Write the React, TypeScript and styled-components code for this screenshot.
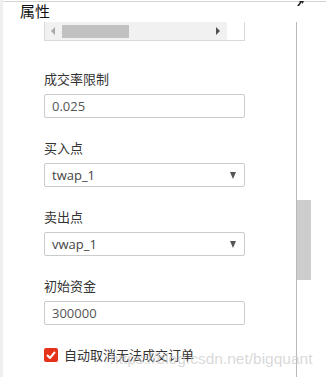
import React from "react";
import styled, { createGlobalStyle } from "styled-components";

const GlobalStyle = createGlobalStyle`
  html, body {
    margin: 0;
    padding: 0;
    background: #fff;
  }
  body {
    font-family: "Open Sans", "Noto Sans CJK SC", sans-serif;
  }
`

const Frame = styled.div`
  position: relative;
  width: 326px;
  height: 377px;
  overflow: hidden;
  display: flex;
  background: #fff;
`

const LeftStrip = styled.div`
  width: 3px;
  flex-shrink: 0;
  background: #efefef;
`

const Main = styled.div`
  flex: 1;
  display: flex;
  flex-direction: column;
`

const TopRule = styled.div`
  height: 1px;
  margin-top: 1px;
  background: #d4d4d4;
`

const Header = styled.div`
  height: 20px;
  display: flex;
  align-items: center;
  justify-content: space-between;
  padding-left: 17px;
  padding-right: 22px;
`

const Title = styled.span`
  font-family: "Noto Sans CJK SC", sans-serif;
  font-size: 15px;
  line-height: 20px;
  color: #111;
  margin-top: -2px;
`

const CornerIcon = styled.svg`
  align-self: flex-start;
  margin-top: -1px;
`

const Body = styled.div`
  flex: 1;
  display: flex;
`

const Content = styled.div`
  width: 294px;
  border-right: 1px solid #b9b9b9;
  padding-left: 41px;
  box-sizing: border-box;
`

const ScrollTrack = styled.div`
  width: 14px;
  padding-top: 178px;
`

const ScrollThumb = styled.div`
  height: 80px;
  background: #cdcdcd;
`

const HScroll = styled.div`
  width: 201px;
  height: 19px;
  box-sizing: border-box;
  display: flex;
  border: 1px solid #d9d9d9;
  border-top: none;
  background: #f1f1f1;
`

const HTrack = styled.div`
  flex: 1;
  display: flex;
  align-items: center;
  padding-left: 6px;
`

const HThumb = styled.div`
  width: 67px;
  height: 13px;
  margin-left: 7px;
  background: #c1c1c1;
`

const HSpacer = styled.div`
  flex: 1;
`

const Arrow = styled.span<{ $dir: "left" | "right"; $color: string }>`
  width: 0;
  height: 0;
  border-top: 4px solid transparent;
  border-bottom: 4px solid transparent;
  ${({ $dir, $color }) =>
    $dir === "left"
      ? `border-right: 4px solid ${$color};`
      : `border-left: 4px solid ${$color}; margin-right: 7px;`}
`

const Corner = styled.div`
  width: 17px;
  background: #fff;
`

const Form = styled.div`
  padding-top: 29px;
`

const Field = styled.div`
  & + & {
    margin-top: 21px;
  }
`

const Label = styled.div`
  font-family: "Noto Sans CJK SC", sans-serif;
  font-size: 13px;
  line-height: 18px;
  color: #333;
  margin-bottom: 6px;
`

const Box = styled.div`
  width: 201px;
  height: 24px;
  box-sizing: border-box;
  border: 1px solid #cbcbcb;
  border-radius: 2px;
  display: flex;
  align-items: center;
  justify-content: space-between;
  padding: 0 8px 0 7px;
  font-family: "Open Sans", sans-serif;
  font-size: 13px;
  color: #555;
  background: #fff;
`

const SelectText = styled.span`
  color: #444;
`

const Caret = styled.span`
  width: 0;
  height: 0;
  border-left: 3.5px solid transparent;
  border-right: 3.5px solid transparent;
  border-top: 7px solid #555;
`

const CheckRow = styled.label`
  margin-top: 21px;
  display: flex;
  align-items: center;
  gap: 6px;
  font-family: "Noto Sans CJK SC", sans-serif;
  font-size: 13px;
  line-height: 18px;
  color: #333;
`

const CheckBox = styled.span`
  width: 14px;
  height: 14px;
  border-radius: 2px;
  background: #e5331b;
  display: flex;
  align-items: center;
  justify-content: center;
`

const Watermark = styled.div`
  position: absolute;
  left: 110px;
  top: 350px;
  font-family: "Liberation Sans", sans-serif;
  font-size: 15.5px;
  color: rgba(200, 200, 200, 0.7);
  pointer-events: none;
`

interface FieldProps {
  label: string;
  value: string;
  select?: boolean;
}

const FormField: React.FC<FieldProps> = ({ label, value, select }) => (
  <Field>
    <Label>{label}</Label>
    <Box>
      {select ? <SelectText>{value}</SelectText> : <span>{value}</span>}
      {select && <Caret />}
    </Box>
  </Field>
)

const App: React.FC = () => {
  return (
    <>
      <GlobalStyle />
      <Frame>
        <LeftStrip />
        <Main>
          <TopRule />
          <Header>
            <Title>属性</Title>
            <CornerIcon width="7" height="5" viewBox="0 0 7 5">
              <polygon points="0,5 3,1 2,1 3,0 7,0 6,2 5,3 5,1 2,5" fill="#222" />
            </CornerIcon>
          </Header>
          <Body>
            <Content>
              <HScroll>
                <HTrack>
                  <Arrow $dir="left" $color="#a8a8a8" />
                  <HThumb />
                  <HSpacer />
                  <Arrow $dir="right" $color="#505050" />
                </HTrack>
                <Corner />
              </HScroll>
              <Form>
                <FormField label="成交率限制" value="0.025" />
                <FormField label="买入点" value="twap_1" select />
                <FormField label="卖出点" value="vwap_1" select />
                <FormField label="初始资金" value="300000" />
                <CheckRow>
                  <CheckBox>
                    <svg width="10" height="8" viewBox="0 0 10 8">
                      <path d="M1 4 L4 7 L9 1" stroke="#fff" strokeWidth="2" fill="none" />
                    </svg>
                  </CheckBox>
                  自动取消无法成交订单
                </CheckRow>
              </Form>
            </Content>
            <ScrollTrack>
              <ScrollThumb />
            </ScrollTrack>
          </Body>
        </Main>
        <Watermark>https://blog.csdn.net/bigquant</Watermark>
      </Frame>
    </>
  );
}

export default App;
